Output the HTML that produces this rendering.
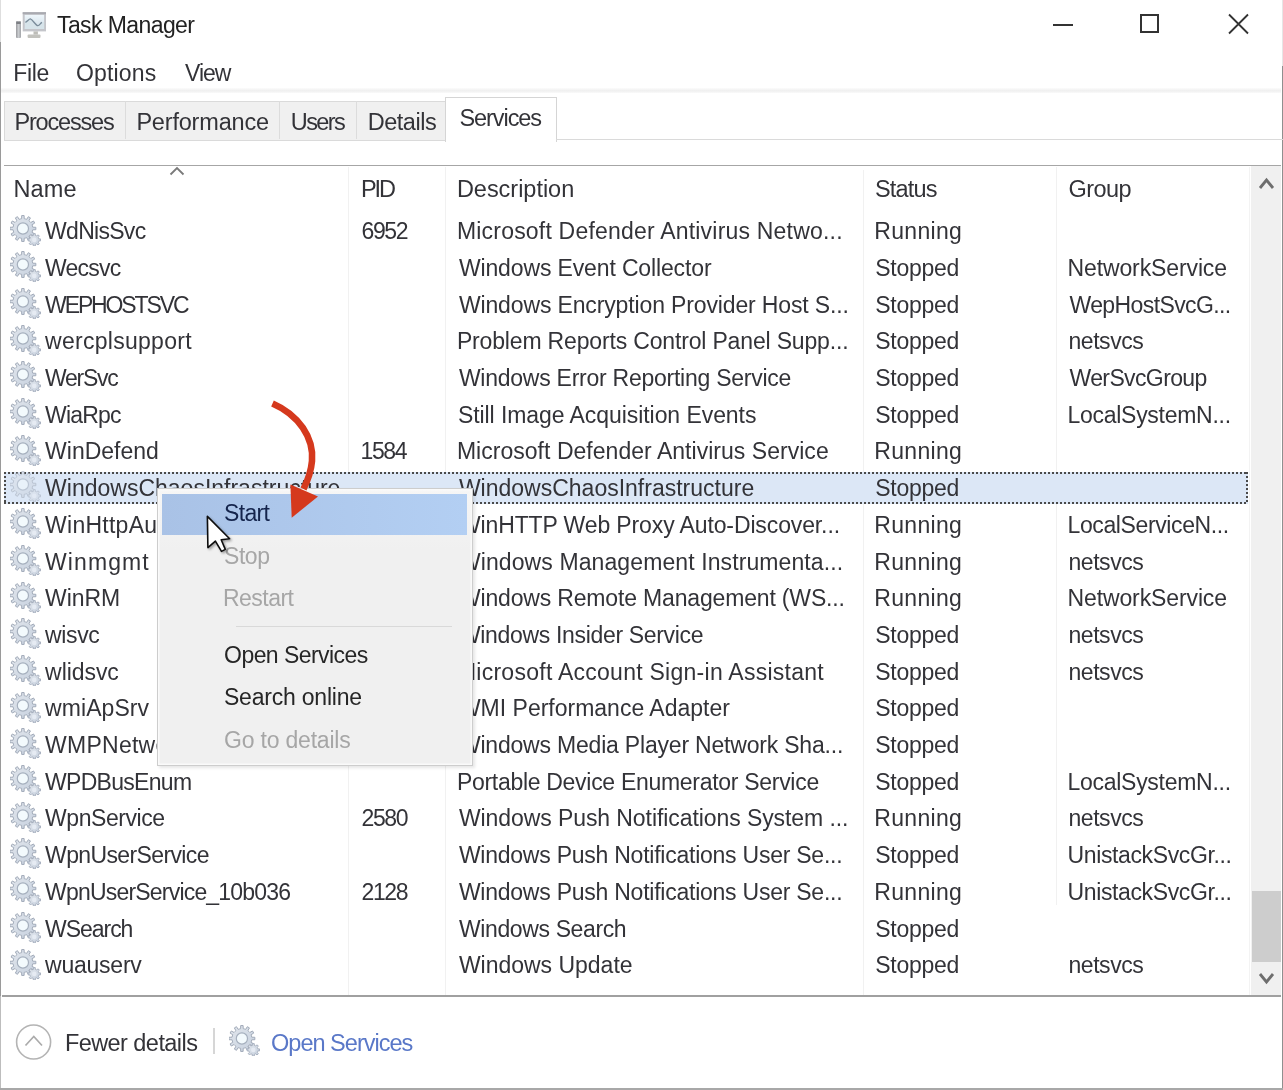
<!DOCTYPE html>
<html><head><meta charset="utf-8">
<style>
html,body{margin:0;padding:0;width:1283px;height:1090px;overflow:hidden;background:#fff;}
body{position:relative;font-family:"Liberation Sans",sans-serif;color:#333338;}
#wrap{position:absolute;left:0;top:0;width:1283px;height:1090px;filter:blur(0.35px);}
.a{position:absolute;}
.tx{position:absolute;white-space:nowrap;}
.gi{position:absolute;}
.ln{position:absolute;}
</style></head><body><div id="wrap">
<svg width="0" height="0" style="position:absolute">
 <defs>
  <filter id="bl" x="-20%" y="-20%" width="140%" height="140%"><feGaussianBlur stdDeviation="0.45"/></filter>
  <filter id="bl2" x="-20%" y="-20%" width="140%" height="140%"><feGaussianBlur stdDeviation="0.7"/></filter>
  <linearGradient id="gg" x1="0" y1="0" x2="1" y2="1"><stop offset="0" stop-color="#e2e7ed"/><stop offset="1" stop-color="#c6d0de"/></linearGradient>
  <g id="gear" filter="url(#bl)">
   <path d="M10.34 3.94 L11.61 3.68 L11.68 0.56 L14.12 0.56 L14.19 3.68 L15.46 3.94 L16.69 4.35 L18.31 1.68 L20.43 2.90 L18.93 5.65 L19.90 6.50 L20.75 7.47 L23.50 5.97 L24.72 8.09 L22.05 9.71 L22.46 10.94 L22.72 12.21 L25.84 12.28 L25.84 14.72 L22.72 14.79 L22.46 16.06 L22.05 17.29 L24.72 18.91 L23.50 21.03 L20.75 19.53 L19.90 20.50 L18.93 21.35 L20.43 24.10 L18.31 25.32 L16.69 22.65 L15.46 23.06 L14.19 23.32 L14.12 26.44 L11.68 26.44 L11.61 23.32 L10.34 23.06 L9.11 22.65 L7.49 25.32 L5.37 24.10 L6.87 21.35 L5.90 20.50 L5.05 19.53 L2.30 21.03 L1.08 18.91 L3.75 17.29 L3.34 16.06 L3.08 14.79 L-0.04 14.72 L-0.04 12.28 L3.08 12.21 L3.34 10.94 L3.75 9.71 L1.08 8.09 L2.30 5.97 L5.05 7.47 L5.90 6.50 L6.87 5.65 L5.37 2.90 L7.49 1.68 L9.11 4.35 Z" fill="url(#gg)" stroke="#a2abb9" stroke-width="1.0" stroke-linejoin="round"/>
   <circle cx="12.9" cy="13.5" r="5.6" fill="#f3fafd" stroke="#a6b0be" stroke-width="1.2"/>
   <path d="M22.54 20.65 L23.31 20.41 L23.28 18.68 L25.32 18.68 L25.29 20.41 L26.06 20.65 L26.78 21.03 L27.98 19.79 L29.41 21.22 L28.17 22.42 L28.55 23.14 L28.79 23.91 L30.52 23.88 L30.52 25.92 L28.79 25.89 L28.55 26.66 L28.17 27.38 L29.41 28.58 L27.98 30.01 L26.78 28.77 L26.06 29.15 L25.29 29.39 L25.32 31.12 L23.28 31.12 L23.31 29.39 L22.54 29.15 L21.82 28.77 L20.62 30.01 L19.19 28.58 L20.43 27.38 L20.05 26.66 L19.81 25.89 L18.08 25.92 L18.08 23.88 L19.81 23.91 L20.05 23.14 L20.43 22.42 L19.19 21.22 L20.62 19.79 L21.82 21.03 Z" fill="url(#gg)" stroke="#a3abbb" stroke-width="0.9" stroke-linejoin="round"/>
   <circle cx="24.3" cy="24.9" r="2.3" fill="#e6ebf3"/>
  </g>
 </defs>
</svg>

<!-- window borders -->
<div class="ln" style="left:0;top:0;width:1.3px;height:42px;background:#dedede"></div>
<div class="ln" style="left:0;top:42px;width:1.3px;height:954px;background:#9a9a9a"></div>
<div class="ln" style="left:0;top:996px;width:1.3px;height:94px;background:#bdbdbd"></div>
<div class="ln" style="left:1281.5px;top:0;width:1.5px;height:66px;background:#e6e6e6"></div>
<div class="ln" style="left:1281.5px;top:66px;width:1.5px;height:1024px;background:#8f8f8f"></div>
<div class="ln" style="left:0;top:1088px;width:1283px;height:2px;background:#a8a8a8"></div>
<!-- title bar -->
<svg class="a" style="left:10px;top:5px" width="45" height="40" viewBox="10 5 45 40">
  <defs><linearGradient id="scr" x1="0" y1="0" x2="0" y2="1"><stop offset="0" stop-color="#eef6fb"/><stop offset="1" stop-color="#cfdde6"/></linearGradient>
  <linearGradient id="tw" x1="0" y1="0" x2="1" y2="0"><stop offset="0" stop-color="#9a9a9e"/><stop offset="0.5" stop-color="#c9cccf"/><stop offset="1" stop-color="#a2a4a8"/></linearGradient></defs>
  <g filter="url(#bl2)">
  <rect x="16" y="21.3" width="5" height="16.7" rx="1" fill="url(#tw)"/>
  <rect x="16.3" y="21.5" width="4.4" height="2.5" fill="#7d7f84"/>
  <rect x="22.7" y="12.2" width="23.3" height="19.2" fill="#c4c5ca"/>
  <rect x="22.7" y="12.2" width="23.3" height="2" fill="#a9aab0"/>
  <rect x="24.7" y="14.9" width="19.4" height="14" fill="url(#scr)"/>
  <path d="M25.4 22.3 C 27.5 21.5, 29 18.6, 30.6 19 C 33 19.8, 35.5 25.6, 37.9 25.6 C 39.5 25.6, 40.5 23, 41.9 22.3 L 44.1 22 L 44.1 28.9 L 24.7 28.9 Z" fill="#d7e4ea"/>
  <path d="M25.4 22.3 C 27.5 21.5, 29 18.6, 30.6 19 C 33 19.8, 35.5 25.6, 37.9 25.6 C 39.5 25.6, 40.5 23, 41.9 22.3" fill="none" stroke="#7a8c9a" stroke-width="1.3"/>
  <rect x="33.5" y="31.4" width="4.4" height="3.2" fill="#bdbdb8"/>
  <rect x="27.6" y="34.6" width="12.9" height="3.4" rx="1" fill="#c2c2bd"/>
  </g>
</svg>

<!-- window controls -->
<div class="ln" style="left:1053px;top:23.5px;width:20px;height:2px;background:#333"></div>
<div class="ln" style="left:1139.5px;top:13.5px;width:15px;height:15px;border:2px solid #333"></div>
<svg class="a" style="left:1227px;top:13px" width="23" height="22" viewBox="0 0 23 22">
  <path d="M2 1.5 L21 20.5 M21 1.5 L2 20.5" stroke="#333" stroke-width="1.8"/>
</svg>

<!-- menu -->
<div class="ln" style="left:1px;top:88px;width:1280px;height:5px;background:linear-gradient(#fcfcfc,#efefef 55%,#fafafa)"></div>

<!-- tabs -->
<div class="ln" style="left:4px;top:100.5px;width:441px;height:38px;background:#f0f0f0;border:1px solid #dadada;border-right:none"></div>
<div class="ln" style="left:124.5px;top:101px;width:1px;height:38px;background:#dcdcdc"></div>
<div class="ln" style="left:278.5px;top:101px;width:1px;height:38px;background:#dcdcdc"></div>
<div class="ln" style="left:355.5px;top:101px;width:1px;height:38px;background:#dcdcdc"></div>
<div class="ln" style="left:444.5px;top:96.5px;width:110px;height:44px;background:#fff;border:1px solid #d5d5d5;border-bottom:none"></div>
<div class="ln" style="left:555.5px;top:139px;width:1726px;height:1px;background:#dadada"></div>

<!-- header -->
<div class="ln" style="left:4px;top:164.5px;width:1277px;height:1.5px;background:#a6a6a6"></div>
<svg class="a" style="left:168px;top:164px" width="18" height="13" viewBox="0 0 18 13">
  <polyline points="2.5,10.5 9,4 15.5,10.5" fill="none" stroke="#7a7a7a" stroke-width="1.8"/>
</svg>
<!-- column separators -->
<div class="ln" style="left:348px;top:167px;width:1px;height:828px;background:#f1f1f1"></div>
<div class="ln" style="left:445px;top:167px;width:1px;height:828px;background:#f1f1f1"></div>
<div class="ln" style="left:862.5px;top:170px;width:1px;height:825px;background:#f1f1f1"></div>
<div class="ln" style="left:1055.5px;top:167px;width:1px;height:738px;background:#f1f1f1"></div>
<div class="ln" style="left:1249px;top:167px;width:1px;height:828px;background:#f3f3f3"></div>

<!-- scrollbar -->
<div class="ln" style="left:1251px;top:166px;width:30px;height:829px;background:#f0f0f0"></div>
<svg class="a" style="left:1257px;top:174px" width="19" height="18" viewBox="0 0 19 18">
  <polyline points="3,14 9.5,6 16,14" fill="none" stroke="#6e6e6e" stroke-width="2.8"/>
</svg>
<div class="ln" style="left:1252px;top:891px;width:29px;height:71px;background:#cdcdcd"></div>
<svg class="a" style="left:1257px;top:968px" width="19" height="20" viewBox="0 0 19 20">
  <polyline points="3,6 9.5,14 16,6" fill="none" stroke="#6e6e6e" stroke-width="2.8"/>
</svg>

<!-- selected row -->
<div class="ln" style="left:4px;top:471.5px;width:1244px;height:32.5px;background:#dce7f6"></div>
<div class="ln" style="left:4px;top:471.5px;width:1244px;height:2px;background:repeating-linear-gradient(90deg,#4a4a4a 0 2px,transparent 2px 4px)"></div>
<div class="ln" style="left:4px;top:502px;width:1244px;height:2px;background:repeating-linear-gradient(90deg,#4a4a4a 0 2px,transparent 2px 4px)"></div>
<div class="ln" style="left:4px;top:471.5px;width:2px;height:32.5px;background:repeating-linear-gradient(180deg,#4a4a4a 0 2px,transparent 2px 4px)"></div>
<div class="ln" style="left:1246px;top:471.5px;width:2px;height:32.5px;background:repeating-linear-gradient(180deg,#4a4a4a 0 2px,transparent 2px 4px)"></div>

<svg class="gi" style="left:10px;top:214.50px;" width="31" height="31" viewBox="0 0 31 31"><use href="#gear"/></svg>
<div class="tx" style="left:45.10px;top:218.20px;font-size:23px;line-height:26px;letter-spacing:-0.714px;">WdNisSvc</div>
<div class="tx" style="left:361.60px;top:218.20px;font-size:23px;line-height:26px;letter-spacing:-1.433px;">6952</div>
<div class="tx" style="left:456.90px;top:218.20px;font-size:23px;line-height:26px;letter-spacing:0.203px;">Microsoft Defender Antivirus Netwo...</div>
<div class="tx" style="left:874.20px;top:218.20px;font-size:23px;line-height:26px;letter-spacing:0.333px;">Running</div>
<svg class="gi" style="left:10px;top:251.20px;" width="31" height="31" viewBox="0 0 31 31"><use href="#gear"/></svg>
<div class="tx" style="left:45.10px;top:254.90px;font-size:23px;line-height:26px;letter-spacing:-0.800px;">Wecsvc</div>
<div class="tx" style="left:458.90px;top:254.90px;font-size:23px;line-height:26px;letter-spacing:-0.136px;">Windows Event Collector</div>
<div class="tx" style="left:875.20px;top:254.90px;font-size:23px;line-height:26px;letter-spacing:-0.250px;">Stopped</div>
<div class="tx" style="left:1067.50px;top:254.90px;font-size:23px;line-height:26px;letter-spacing:-0.115px;">NetworkService</div>
<svg class="gi" style="left:10px;top:287.90px;" width="31" height="31" viewBox="0 0 31 31"><use href="#gear"/></svg>
<div class="tx" style="left:45.10px;top:291.60px;font-size:23px;line-height:26px;letter-spacing:-2.122px;">WEPHOSTSVC</div>
<div class="tx" style="left:458.90px;top:291.60px;font-size:23px;line-height:26px;letter-spacing:-0.136px;">Windows Encryption Provider Host S...</div>
<div class="tx" style="left:875.20px;top:291.60px;font-size:23px;line-height:26px;letter-spacing:-0.250px;">Stopped</div>
<div class="tx" style="left:1069.50px;top:291.60px;font-size:23px;line-height:26px;letter-spacing:-0.608px;">WepHostSvcG...</div>
<svg class="gi" style="left:10px;top:324.60px;" width="31" height="31" viewBox="0 0 31 31"><use href="#gear"/></svg>
<div class="tx" style="left:45.10px;top:328.30px;font-size:23px;line-height:26px;letter-spacing:0.275px;">wercplsupport</div>
<div class="tx" style="left:456.90px;top:328.30px;font-size:23px;line-height:26px;letter-spacing:-0.164px;">Problem Reports Control Panel Supp...</div>
<div class="tx" style="left:875.20px;top:328.30px;font-size:23px;line-height:26px;letter-spacing:-0.250px;">Stopped</div>
<div class="tx" style="left:1068.50px;top:328.30px;font-size:23px;line-height:26px;letter-spacing:-0.450px;">netsvcs</div>
<svg class="gi" style="left:10px;top:361.30px;" width="31" height="31" viewBox="0 0 31 31"><use href="#gear"/></svg>
<div class="tx" style="left:45.10px;top:365.00px;font-size:23px;line-height:26px;letter-spacing:-1.280px;">WerSvc</div>
<div class="tx" style="left:458.90px;top:365.00px;font-size:23px;line-height:26px;letter-spacing:-0.250px;">Windows Error Reporting Service</div>
<div class="tx" style="left:875.20px;top:365.00px;font-size:23px;line-height:26px;letter-spacing:-0.250px;">Stopped</div>
<div class="tx" style="left:1069.50px;top:365.00px;font-size:23px;line-height:26px;letter-spacing:-0.620px;">WerSvcGroup</div>
<svg class="gi" style="left:10px;top:398.00px;" width="31" height="31" viewBox="0 0 31 31"><use href="#gear"/></svg>
<div class="tx" style="left:45.10px;top:401.70px;font-size:23px;line-height:26px;letter-spacing:-0.800px;">WiaRpc</div>
<div class="tx" style="left:457.90px;top:401.70px;font-size:23px;line-height:26px;letter-spacing:-0.066px;">Still Image Acquisition Events</div>
<div class="tx" style="left:875.20px;top:401.70px;font-size:23px;line-height:26px;letter-spacing:-0.250px;">Stopped</div>
<div class="tx" style="left:1067.50px;top:401.70px;font-size:23px;line-height:26px;letter-spacing:-0.279px;">LocalSystemN...</div>
<svg class="gi" style="left:10px;top:434.70px;" width="31" height="31" viewBox="0 0 31 31"><use href="#gear"/></svg>
<div class="tx" style="left:45.10px;top:438.40px;font-size:23px;line-height:26px;letter-spacing:-0.012px;">WinDefend</div>
<div class="tx" style="left:360.60px;top:438.40px;font-size:23px;line-height:26px;letter-spacing:-1.433px;">1584</div>
<div class="tx" style="left:456.90px;top:438.40px;font-size:23px;line-height:26px;letter-spacing:0.031px;">Microsoft Defender Antivirus Service</div>
<div class="tx" style="left:874.20px;top:438.40px;font-size:23px;line-height:26px;letter-spacing:0.333px;">Running</div>
<svg class="gi" style="left:10px;top:471.40px;opacity:0.6;" width="31" height="31" viewBox="0 0 31 31"><use href="#gear"/></svg>
<div class="tx" style="left:45.10px;top:475.10px;font-size:23px;line-height:26px;">WindowsChaosInfrastructure</div>
<div class="tx" style="left:458.90px;top:475.10px;font-size:23px;line-height:26px;">WindowsChaosInfrastructure</div>
<div class="tx" style="left:875.20px;top:475.10px;font-size:23px;line-height:26px;letter-spacing:-0.250px;">Stopped</div>
<svg class="gi" style="left:10px;top:508.10px;" width="31" height="31" viewBox="0 0 31 31"><use href="#gear"/></svg>
<div class="tx" style="left:45.10px;top:511.80px;font-size:23px;line-height:26px;letter-spacing:0.25px;">WinHttpAutoProxySvc</div>
<div class="tx" style="left:458.90px;top:511.80px;font-size:23px;line-height:26px;letter-spacing:-0.121px;">WinHTTP Web Proxy Auto-Discover...</div>
<div class="tx" style="left:874.20px;top:511.80px;font-size:23px;line-height:26px;letter-spacing:0.333px;">Running</div>
<div class="tx" style="left:1067.50px;top:511.80px;font-size:23px;line-height:26px;letter-spacing:-0.380px;">LocalServiceN...</div>
<svg class="gi" style="left:10px;top:544.80px;" width="31" height="31" viewBox="0 0 31 31"><use href="#gear"/></svg>
<div class="tx" style="left:45.10px;top:548.50px;font-size:23px;line-height:26px;letter-spacing:1.067px;">Winmgmt</div>
<div class="tx" style="left:458.90px;top:548.50px;font-size:23px;line-height:26px;letter-spacing:0.103px;">Windows Management Instrumenta...</div>
<div class="tx" style="left:874.20px;top:548.50px;font-size:23px;line-height:26px;letter-spacing:0.333px;">Running</div>
<div class="tx" style="left:1068.50px;top:548.50px;font-size:23px;line-height:26px;letter-spacing:-0.450px;">netsvcs</div>
<svg class="gi" style="left:10px;top:581.50px;" width="31" height="31" viewBox="0 0 31 31"><use href="#gear"/></svg>
<div class="tx" style="left:45.10px;top:585.20px;font-size:23px;line-height:26px;letter-spacing:-0.100px;">WinRM</div>
<div class="tx" style="left:458.90px;top:585.20px;font-size:23px;line-height:26px;letter-spacing:-0.165px;">Windows Remote Management (WS...</div>
<div class="tx" style="left:874.20px;top:585.20px;font-size:23px;line-height:26px;letter-spacing:0.333px;">Running</div>
<div class="tx" style="left:1067.50px;top:585.20px;font-size:23px;line-height:26px;letter-spacing:-0.115px;">NetworkService</div>
<svg class="gi" style="left:10px;top:618.20px;" width="31" height="31" viewBox="0 0 31 31"><use href="#gear"/></svg>
<div class="tx" style="left:45.10px;top:621.90px;font-size:23px;line-height:26px;letter-spacing:-0.375px;">wisvc</div>
<div class="tx" style="left:458.90px;top:621.90px;font-size:23px;line-height:26px;letter-spacing:-0.327px;">Windows Insider Service</div>
<div class="tx" style="left:875.20px;top:621.90px;font-size:23px;line-height:26px;letter-spacing:-0.250px;">Stopped</div>
<div class="tx" style="left:1068.50px;top:621.90px;font-size:23px;line-height:26px;letter-spacing:-0.450px;">netsvcs</div>
<svg class="gi" style="left:10px;top:654.90px;" width="31" height="31" viewBox="0 0 31 31"><use href="#gear"/></svg>
<div class="tx" style="left:45.10px;top:658.60px;font-size:23px;line-height:26px;letter-spacing:-0.067px;">wlidsvc</div>
<div class="tx" style="left:456.90px;top:658.60px;font-size:23px;line-height:26px;letter-spacing:0.262px;">Microsoft Account Sign-in Assistant</div>
<div class="tx" style="left:875.20px;top:658.60px;font-size:23px;line-height:26px;letter-spacing:-0.250px;">Stopped</div>
<div class="tx" style="left:1068.50px;top:658.60px;font-size:23px;line-height:26px;letter-spacing:-0.450px;">netsvcs</div>
<svg class="gi" style="left:10px;top:691.60px;" width="31" height="31" viewBox="0 0 31 31"><use href="#gear"/></svg>
<div class="tx" style="left:45.10px;top:695.30px;font-size:23px;line-height:26px;letter-spacing:0.057px;">wmiApSrv</div>
<div class="tx" style="left:458.90px;top:695.30px;font-size:23px;line-height:26px;">WMI Performance Adapter</div>
<div class="tx" style="left:875.20px;top:695.30px;font-size:23px;line-height:26px;letter-spacing:-0.250px;">Stopped</div>
<svg class="gi" style="left:10px;top:728.30px;" width="31" height="31" viewBox="0 0 31 31"><use href="#gear"/></svg>
<div class="tx" style="left:45.10px;top:732.00px;font-size:23px;line-height:26px;letter-spacing:0.25px;">WMPNetworkSvc</div>
<div class="tx" style="left:458.90px;top:732.00px;font-size:23px;line-height:26px;letter-spacing:-0.197px;">Windows Media Player Network Sha...</div>
<div class="tx" style="left:875.20px;top:732.00px;font-size:23px;line-height:26px;letter-spacing:-0.250px;">Stopped</div>
<svg class="gi" style="left:10px;top:765.00px;" width="31" height="31" viewBox="0 0 31 31"><use href="#gear"/></svg>
<div class="tx" style="left:45.10px;top:768.70px;font-size:23px;line-height:26px;letter-spacing:-0.711px;">WPDBusEnum</div>
<div class="tx" style="left:456.90px;top:768.70px;font-size:23px;line-height:26px;letter-spacing:-0.294px;">Portable Device Enumerator Service</div>
<div class="tx" style="left:875.20px;top:768.70px;font-size:23px;line-height:26px;letter-spacing:-0.250px;">Stopped</div>
<div class="tx" style="left:1067.50px;top:768.70px;font-size:23px;line-height:26px;letter-spacing:-0.279px;">LocalSystemN...</div>
<svg class="gi" style="left:10px;top:801.70px;" width="31" height="31" viewBox="0 0 31 31"><use href="#gear"/></svg>
<div class="tx" style="left:45.10px;top:805.40px;font-size:23px;line-height:26px;letter-spacing:-0.456px;">WpnService</div>
<div class="tx" style="left:361.60px;top:805.40px;font-size:23px;line-height:26px;letter-spacing:-1.433px;">2580</div>
<div class="tx" style="left:458.90px;top:805.40px;font-size:23px;line-height:26px;letter-spacing:-0.081px;">Windows Push Notifications System ...</div>
<div class="tx" style="left:874.20px;top:805.40px;font-size:23px;line-height:26px;letter-spacing:0.333px;">Running</div>
<div class="tx" style="left:1068.50px;top:805.40px;font-size:23px;line-height:26px;letter-spacing:-0.450px;">netsvcs</div>
<svg class="gi" style="left:10px;top:838.40px;" width="31" height="31" viewBox="0 0 31 31"><use href="#gear"/></svg>
<div class="tx" style="left:45.10px;top:842.10px;font-size:23px;line-height:26px;letter-spacing:-0.631px;">WpnUserService</div>
<div class="tx" style="left:458.90px;top:842.10px;font-size:23px;line-height:26px;letter-spacing:-0.242px;">Windows Push Notifications User Se...</div>
<div class="tx" style="left:875.20px;top:842.10px;font-size:23px;line-height:26px;letter-spacing:-0.250px;">Stopped</div>
<div class="tx" style="left:1067.50px;top:842.10px;font-size:23px;line-height:26px;letter-spacing:-0.373px;">UnistackSvcGr...</div>
<svg class="gi" style="left:10px;top:875.10px;" width="31" height="31" viewBox="0 0 31 31"><use href="#gear"/></svg>
<div class="tx" style="left:45.10px;top:878.80px;font-size:23px;line-height:26px;letter-spacing:-0.805px;">WpnUserService_10b036</div>
<div class="tx" style="left:361.60px;top:878.80px;font-size:23px;line-height:26px;letter-spacing:-1.433px;">2128</div>
<div class="tx" style="left:458.90px;top:878.80px;font-size:23px;line-height:26px;letter-spacing:-0.242px;">Windows Push Notifications User Se...</div>
<div class="tx" style="left:874.20px;top:878.80px;font-size:23px;line-height:26px;letter-spacing:0.333px;">Running</div>
<div class="tx" style="left:1067.50px;top:878.80px;font-size:23px;line-height:26px;letter-spacing:-0.373px;">UnistackSvcGr...</div>
<svg class="gi" style="left:10px;top:911.80px;" width="31" height="31" viewBox="0 0 31 31"><use href="#gear"/></svg>
<div class="tx" style="left:45.10px;top:915.50px;font-size:23px;line-height:26px;letter-spacing:-1.050px;">WSearch</div>
<div class="tx" style="left:458.90px;top:915.50px;font-size:23px;line-height:26px;letter-spacing:-0.369px;">Windows Search</div>
<div class="tx" style="left:875.20px;top:915.50px;font-size:23px;line-height:26px;letter-spacing:-0.250px;">Stopped</div>
<svg class="gi" style="left:10px;top:948.50px;" width="31" height="31" viewBox="0 0 31 31"><use href="#gear"/></svg>
<div class="tx" style="left:45.10px;top:952.20px;font-size:23px;line-height:26px;letter-spacing:-0.243px;">wuauserv</div>
<div class="tx" style="left:458.90px;top:952.20px;font-size:23px;line-height:26px;letter-spacing:-0.015px;">Windows Update</div>
<div class="tx" style="left:875.20px;top:952.20px;font-size:23px;line-height:26px;letter-spacing:-0.250px;">Stopped</div>
<div class="tx" style="left:1068.50px;top:952.20px;font-size:23px;line-height:26px;letter-spacing:-0.450px;">netsvcs</div>
<div class="tx" style="left:57.00px;top:12.00px;font-size:23px;line-height:26px;letter-spacing:-0.591px;color:#222;">Task Manager</div>
<div class="tx" style="left:13.20px;top:60.20px;font-size:23px;line-height:26px;letter-spacing:-0.300px;">File</div>
<div class="tx" style="left:76.00px;top:60.20px;font-size:23px;line-height:26px;letter-spacing:0.150px;">Options</div>
<div class="tx" style="left:185.10px;top:60.20px;font-size:23px;line-height:26px;letter-spacing:-1.067px;">View</div>
<div class="tx" style="left:14.40px;top:108.60px;font-size:23.5px;line-height:26px;letter-spacing:-1.175px;">Processes</div>
<div class="tx" style="left:136.40px;top:108.60px;font-size:23.5px;line-height:26px;letter-spacing:-0.190px;">Performance</div>
<div class="tx" style="left:290.80px;top:108.60px;font-size:23.5px;line-height:26px;letter-spacing:-1.625px;">Users</div>
<div class="tx" style="left:367.70px;top:108.60px;font-size:23.5px;line-height:26px;letter-spacing:-0.467px;">Details</div>
<div class="tx" style="left:459.50px;top:104.50px;font-size:23.5px;line-height:26px;letter-spacing:-1.071px;">Services</div>
<div class="tx" style="left:13.40px;top:176.30px;font-size:23.5px;line-height:26px;letter-spacing:0.200px;">Name</div>
<div class="tx" style="left:360.90px;top:175.70px;font-size:23.5px;line-height:26px;letter-spacing:-2.050px;">PID</div>
<div class="tx" style="left:456.90px;top:175.70px;font-size:23.5px;line-height:26px;letter-spacing:-0.020px;">Description</div>
<div class="tx" style="left:875.00px;top:175.70px;font-size:23.5px;line-height:26px;letter-spacing:-0.840px;">Status</div>
<div class="tx" style="left:1068.50px;top:175.70px;font-size:23.5px;line-height:26px;letter-spacing:-0.550px;">Group</div>
<div class="tx" style="left:64.90px;top:1030.00px;font-size:23.5px;line-height:26px;letter-spacing:-0.558px;">Fewer details</div>
<div class="tx" style="left:271.00px;top:1029.80px;font-size:23.5px;line-height:26px;letter-spacing:-0.983px;color:#5a78c8;">Open Services</div>

<div class="ln" style="left:2px;top:995px;width:1279px;height:1.5px;background:#a0a0a0"></div>

<!-- bottom bar -->
<svg class="a" style="left:14px;top:1022px" width="40" height="40" viewBox="0 0 40 40">
  <circle cx="19.6" cy="20" r="17" fill="none" stroke="#b4b4b4" stroke-width="1.6"/>
  <polyline points="11.5,23.5 19.8,14.5 28,23.5" fill="none" stroke="#ababab" stroke-width="1.7"/>
</svg>
<div class="ln" style="left:213px;top:1028px;width:1.5px;height:26px;background:#d6d6d6"></div>
<svg class="gi" style="left:229px;top:1025px" width="31" height="31" viewBox="0 0 31 31"><use href="#gear"/></svg>

<!-- context menu -->
<div class="ln" style="left:157px;top:487.5px;width:314px;height:276.5px;background:linear-gradient(#f6f6f6,#f0f0f0 60px);border:1px solid #cdcdcd;box-shadow:inset 0 0 0 1.5px #fafafa,2px 2px 3px rgba(0,0,0,0.10)"></div>
<div class="ln" style="left:162px;top:493.5px;width:305px;height:41px;background:linear-gradient(90deg,#a9c2e6,#b3cff3)"></div>
<div class="ln" style="left:236px;top:626px;width:216px;height:1px;background:#d9d9d9"></div>

<div class="tx" style="left:224.00px;top:500.30px;font-size:23px;line-height:26px;letter-spacing:-0.650px;color:#14244c;">Start</div>
<div class="tx" style="left:224.00px;top:543.00px;font-size:23px;line-height:26px;letter-spacing:-0.433px;color:#a6a6a6;">Stop</div>
<div class="tx" style="left:223.00px;top:585.30px;font-size:23px;line-height:26px;letter-spacing:-0.533px;color:#a6a6a6;">Restart</div>
<div class="tx" style="left:224.10px;top:641.70px;font-size:23px;line-height:26px;letter-spacing:-0.567px;color:#262626;">Open Services</div>
<div class="tx" style="left:224.00px;top:684.20px;font-size:23px;line-height:26px;letter-spacing:-0.217px;color:#262626;">Search online</div>
<div class="tx" style="left:224.00px;top:726.60px;font-size:23px;line-height:26px;letter-spacing:-0.200px;color:#a6a6a6;">Go to details</div>
<!-- red arrow -->
<svg class="a" style="left:0;top:0" width="400" height="560" viewBox="0 0 400 560">
  <path d="M272.5 403.5 C 299 415, 314 438, 312 461 C 311 472, 308 480, 303.5 489" fill="none" stroke="#d5391d" stroke-width="6.6"/>
  <polygon points="290.4,484.4 318,496.5 291.7,517.7" fill="#d5391d"/>
</svg>

<!-- cursor -->
<svg class="a" style="left:200px;top:510px" width="40" height="50" viewBox="0 0 40 50">
  <defs><filter id="csh" x="-30%" y="-30%" width="160%" height="160%"><feDropShadow dx="1.5" dy="1.5" stdDeviation="1.2" flood-color="#000" flood-opacity="0.35"/></filter></defs>
  <path filter="url(#csh)" d="M7.4 6.4 L7.9 37.6 L15.4 31.1 L21.5 41.4 L25.3 39.4 L21.2 29.8 L29.6 28.8 Z" fill="#fff" stroke="#111" stroke-width="1.6" stroke-linejoin="round"/>
</svg>
</div></body></html>
